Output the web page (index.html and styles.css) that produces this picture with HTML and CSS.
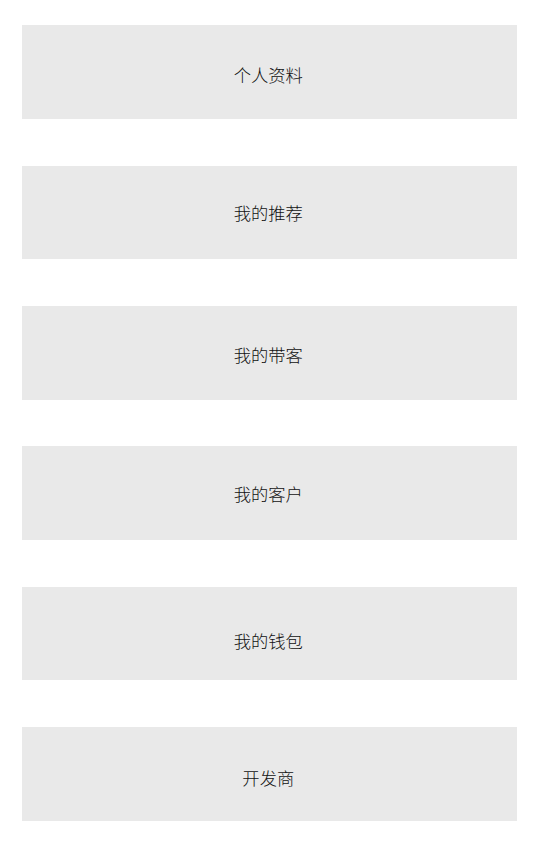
FILE: index.html
```html
<!DOCTYPE html>
<html lang="zh-CN">
<head>
<meta charset="utf-8">
<title>我的</title>
<link rel="stylesheet" href="styles.css">
</head>
<body>
<div class="menu">
  <div class="menu-item item-profile"><span class="label">个人资料</span></div>
  <div class="menu-item item-recommend"><span class="label">我的推荐</span></div>
  <div class="menu-item item-guide"><span class="label">我的带客</span></div>
  <div class="menu-item item-client"><span class="label">我的客户</span></div>
  <div class="menu-item item-wallet"><span class="label">我的钱包</span></div>
  <div class="menu-item item-dev"><span class="label">开发商</span></div>
</div>
</body>
</html>
```
FILE: styles.css
```css
html, body {
  margin: 0;
  padding: 0;
  background: #ffffff;
}
body {
  font-family: "Noto Sans CJK SC", "Noto Sans", sans-serif;
  color: #111111;
}
.menu {
  display: flex;
  flex-direction: column;
  gap: 46.8px;
  padding: 25.2px 23px 0 21.6px;
}
.menu-item {
  height: 93.6px;
  background: #e9e9e9;
  display: flex;
  align-items: center;
  justify-content: center;
  box-sizing: border-box;
  padding-right: 2px;
}
.label {
  font-size: 17.3px;
  font-weight: 300;
  line-height: 1;
}
.item-profile { padding-top: 6px; }
.item-recommend { padding-top: 0; }
.item-guide { padding-top: 4px; }
.item-client { padding-top: 0; }
.item-wallet { padding-top: 15px; }
.item-dev { padding-top: 8px; }
```
